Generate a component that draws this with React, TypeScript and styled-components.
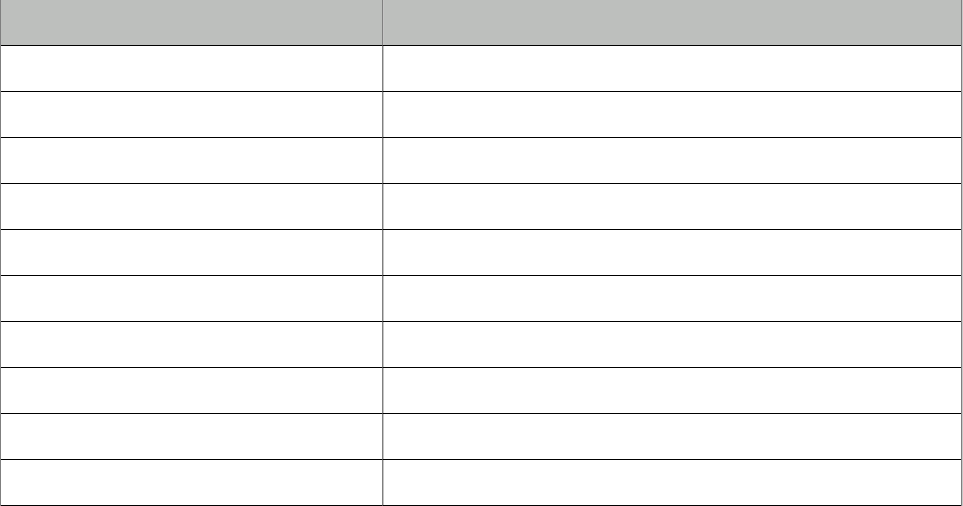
import React from "react";
import styled, { createGlobalStyle } from "styled-components";

const Global = createGlobalStyle`
  html, body { margin: 0; padding: 0; background: #ffffff; }
  body { font-family: "Liberation Sans", Arial, sans-serif; }
`;

const Table = styled.div`
  width: 962px;
  box-sizing: border-box;
  border-left: 1px solid #7f7f7f;
  border-right: 1px solid #7f7f7f;
  box-shadow: 1px 0 0 #c8c8c8;
  display: grid;
  grid-template-columns: 382px 1fr;
`;

const Cell = styled.div<{ $head?: boolean; $first?: boolean }>`
  box-sizing: border-box;
  height: 46px;
  background: ${(p) => (p.$head ? "#bdbfbd" : "#ffffff")};
  border-bottom: 1px solid #000000;
  border-right: ${(p) => (p.$first ? "1px solid #7f7f7f" : "0")};
  box-shadow: ${(p) => (p.$first ? "none" : "inset 1px 0 0 #c4c4c4")};
  font-size: 14px;
  color: #000;
`;

const rows = Array.from({ length: 10 }, (_, i) => i);

export default function App() {
  return (
    <>
      <Global />
      <Table>
        <Cell $head $first />
        <Cell $head />
        {rows.map((r) => (
          <React.Fragment key={r}>
            <Cell $first />
            <Cell />
          </React.Fragment>
        ))}
      </Table>
    </>
  );
}
